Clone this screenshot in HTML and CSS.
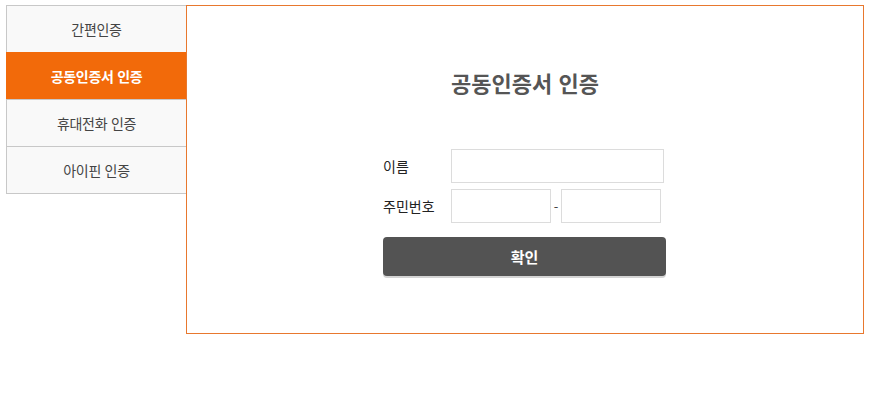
FILE: index.html
```html
<!DOCTYPE html>
<html lang="ko">
<head>
    <meta charset="UTF-8">
    <meta name="viewport" content="width=device-width, initial-scale=1.0">
    <title>공동인증서 인증</title>
    <link rel="stylesheet" href="styles.css">
</head>
<body>
    <div class="wrap">
        <ul class="auth-menu">
            <li><a href="#">간편인증</a></li>
            <li class="on"><a href="#">공동인증서 인증</a></li>
            <li><a href="#">휴대전화 인증</a></li>
            <li><a href="#">아이핀 인증</a></li>
        </ul>
        <div class="auth-box">
            <h2 class="auth-title">공동인증서 인증</h2>
            <form class="auth-form" onsubmit="return false;">
                <div class="row">
                    <label for="user-name">이름</label>
                    <input type="text" id="user-name" class="input-name">
                </div>
                <div class="row">
                    <label for="rrn1">주민번호</label>
                    <input type="text" id="rrn1" class="input-rrn">
                    <span class="dash">-</span>
                    <input type="password" id="rrn2" class="input-rrn">
                </div>
                <button type="submit" class="btn-ok">확인</button>
            </form>
        </div>
    </div>
</body>
</html>
```
FILE: styles.css
```css
body {
    margin: 0;
    padding: 0;
    font-family: "Noto Sans CJK KR", "Noto Sans", sans-serif;
    color: #333;
    background: #fff;
}
.wrap {
    display: flex;
    align-items: flex-start;
    padding: 5px 6px;
}
.auth-menu {
    list-style: none;
    margin: 0;
    padding: 0;
    width: 180px;
    border-bottom: 1px solid #c8c8c8;
}
.auth-menu li {
    border-left: 1px solid #c8c8c8;
    border-top: 1px solid #c8c8c8;
    background: #f9f9f9;
}
.auth-menu li a {
    display: flex;
    align-items: center;
    justify-content: center;
    height: 46px;
    font-size: 14px;
    color: #444;
    text-decoration: none;
    letter-spacing: -0.3px;
}
.auth-menu li.on {
    background: #f26a0a;
    border-color: #f26a0a;
}
.auth-menu li.on a {
    color: #fff;
    font-weight: bold;
}
.auth-box {
    width: 676px;
    height: 327px;
    border: 1px solid #e8782e;
}
.auth-title {
    margin: 61px 0 52px;
    text-align: center;
    font-size: 22px;
    line-height: 30px;
    color: #555;
    font-weight: bold;
}
.auth-form {
    width: 284px;
    margin: 0 auto;
}
.row {
    display: flex;
    align-items: center;
    margin-bottom: 6px;
}
.row label {
    width: 68px;
    font-size: 14px;
    color: #222;
}
.row input {
    height: 34px;
    box-sizing: border-box;
    border: 1px solid #dcdcdc;
    margin: 0;
    padding: 0 8px;
    font-size: 14px;
}
.input-name {
    width: 213px;
}
.input-rrn {
    width: 100px;
}
.dash {
    width: 10px;
    text-align: center;
    font-size: 13px;
    color: #444;
}
.btn-ok {
    display: block;
    width: 283px;
    height: 39px;
    margin-top: 14px;
    border: none;
    border-radius: 4px;
    background: #535353;
    color: #fff;
    font-family: inherit;
    font-size: 15px;
    font-weight: bold;
    box-shadow: 0 2px 0 #d4d4d4;
    cursor: pointer;
}
```
